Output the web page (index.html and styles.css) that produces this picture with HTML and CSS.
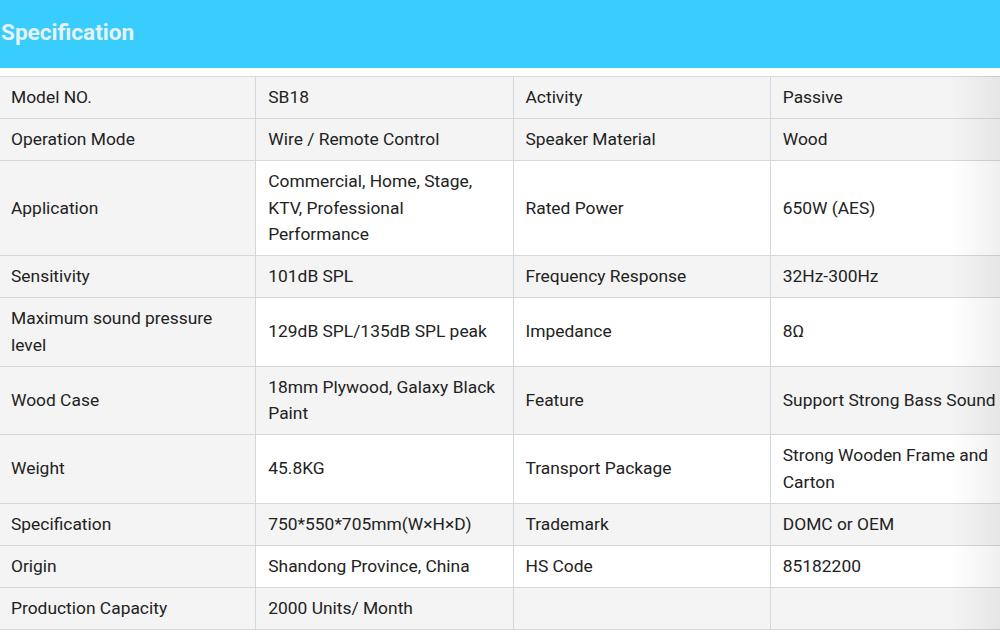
FILE: index.html
```html
<!DOCTYPE html>
<html lang="en">
<head>
<meta charset="utf-8">
<title>Specification</title>
<link rel="stylesheet" href="styles.css">
</head>
<body>
<div class="page">
  <div class="header"><h2 class="title">Specification</h2></div>
  <div class="table-wrap">
    <table class="spec">
      <tbody>
        <tr class="gray"><td>Model NO.</td><td>SB18</td><td>Activity</td><td>Passive</td></tr>
        <tr class="gray"><td>Operation Mode</td><td>Wire / Remote Control</td><td>Speaker Material</td><td>Wood</td></tr>
        <tr><td>Application</td><td>Commercial, Home, Stage, KTV, Professional Performance</td><td>Rated Power</td><td>650W (AES)</td></tr>
        <tr class="gray"><td>Sensitivity</td><td>101dB SPL</td><td>Frequency Response</td><td>32Hz-300Hz</td></tr>
        <tr><td>Maximum sound pressure level</td><td>129dB SPL/135dB SPL peak</td><td>Impedance</td><td>8Ω</td></tr>
        <tr class="gray"><td>Wood Case</td><td>18mm Plywood, Galaxy Black Paint</td><td>Feature</td><td>Support Strong Bass Sound</td></tr>
        <tr><td>Weight</td><td>45.8KG</td><td>Transport Package</td><td>Strong Wooden Frame and Carton</td></tr>
        <tr class="gray"><td>Specification</td><td>750*550*705mm(W×H×D)</td><td>Trademark</td><td>DOMC or OEM</td></tr>
        <tr><td>Origin</td><td>Shandong Province, China</td><td>HS Code</td><td>85182200</td></tr>
        <tr class="gray"><td>Production Capacity</td><td>2000 Units/ Month</td><td></td><td></td></tr>
      </tbody>
    </table>
    <div class="fade"></div>
  </div>
</div>
</body>
</html>
```
FILE: styles.css
```css
html, body {
  margin: 0;
  padding: 0;
  background: #ffffff;
}
.page {
  width: 1000px;
  overflow: hidden;
  font-family: Roboto, "Liberation Sans", Arial, sans-serif;
}
.header {
  height: 68px;
  background: #38cdfc;
  display: flex;
  align-items: center;
}
.title {
  margin: 0 0 4px 1px;
  font-size: 22.6px;
  font-weight: 700;
  color: #e8f1f8;
}
.table-wrap {
  position: relative;
  margin-top: 8px;
}
.spec {
  border-collapse: collapse;
  table-layout: fixed;
  width: 1030px;
  margin-left: -2px;
  font-size: 17.4px;
  color: #222222;
}
.spec td {
  width: 25%;
  border: 1px solid #d3d7de;
  padding: 7px 8px 7.5px 12px;
  line-height: 26.5px;
  vertical-align: middle;
  background: #ffffff;
}
.spec td:first-child {
  background: #f4f4f4;
}
.spec tr.gray td {
  background: #f4f4f4;
}
.fade {
  position: absolute;
  top: 0;
  right: 0;
  bottom: 0;
  width: 50px;
  background: linear-gradient(to right, rgba(0,0,0,0), rgba(0,0,0,0.06));
  pointer-events: none;
}
```
